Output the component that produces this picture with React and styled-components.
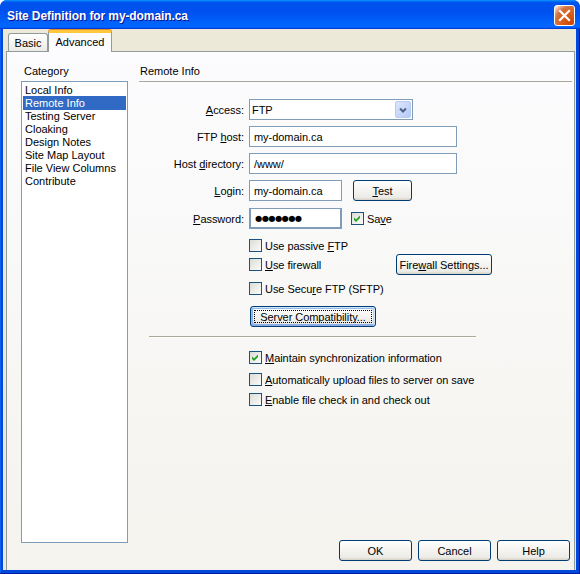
import React from 'react';
import styled, { createGlobalStyle, css } from 'styled-components';

const GlobalStyle = createGlobalStyle`
  html, body { margin: 0; padding: 0; background: #ffffff; }
  body {
    font-family: "Liberation Sans", Arial, sans-serif;
    font-size: 11px;
    color: #000;
  }
`;

const categories = [
  'Local Info',
  'Remote Info',
  'Testing Server',
  'Cloaking',
  'Design Notes',
  'Site Map Layout',
  'File View Columns',
  'Contribute',
];

function CheckMark() {
  return (
    <svg width="11" height="11" viewBox="0 0 11 11">
      <polygon points="2,4.5 4,6.5 8,2.5 8,5 4,9 2,7" fill="#21a121" />
    </svg>
  );
}

function Check({ checked, children, width }) {
  return (
    <CheckField $w={width}>
      <Box>{checked && <CheckMark />}</Box>
      <span>{children}</span>
    </CheckField>
  );
}

function App() {
  return (
    <>
      <GlobalStyle />
      <Window>
        <TitleBar>
          <Title>Site Definition for my-domain.ca</Title>
          <CloseButton>
            <svg width="13" height="13" viewBox="0 0 13 13">
              <path d="M2 2 L11 11 M11 2 L2 11" stroke="#fff" strokeWidth="2.2" strokeLinecap="square" />
            </svg>
          </CloseButton>
        </TitleBar>
        <Frame>
          <Client>
            <TabStrip>
              <Tab $w={40}>Basic</Tab>
              <Tab $w={64} $active>Advanced</Tab>
            </TabStrip>
            <Panel>
              <Sidebar>
                <SideLabel>Category</SideLabel>
                <List>
                  {categories.map((c) => (
                    <ListItem key={c} $selected={c === 'Remote Info'}>{c}</ListItem>
                  ))}
                </List>
              </Sidebar>
              <Main>
                <Heading>Remote Info</Heading>

                <Row $top={17}>
                  <Label><u>A</u>ccess:</Label>
                  <Select>
                    <FieldText $pad={2}>FTP</FieldText>
                    <Arrow>
                      <svg width="8" height="6" viewBox="0 0 8 6">
                        <path d="M1 1.5 L4 4.5 L7 1.5" stroke="#4d6185" strokeWidth="2" fill="none" />
                      </svg>
                    </Arrow>
                  </Select>
                </Row>
                <Row $top={6}>
                  <Label>FTP <u>h</u>ost:</Label>
                  <Field $w={208}><FieldText>my-domain.ca</FieldText></Field>
                </Row>
                <Row $top={6}>
                  <Label>Host <u>d</u>irectory:</Label>
                  <Field $w={208}><FieldText>/www/</FieldText></Field>
                </Row>
                <Row $top={6}>
                  <Label><u>L</u>ogin:</Label>
                  <Field $w={93}><FieldText>my-domain.ca</FieldText></Field>
                  <Button $w={59} $ml={11}><span><u>T</u>est</span></Button>
                </Row>
                <Row $top={7}>
                  <Label><u>P</u>assword:</Label>
                  <Field $w={93} $sunken><Dots>●●●●●●●</Dots></Field>
                  <SaveCheck>
                    <Check checked>Sa<u>v</u>e</Check>
                  </SaveCheck>
                </Row>

                <Row $top={10} $h={13} $indent>
                  <Check>Use passive <u>F</u>TP</Check>
                </Row>
                <Row $top={2} $indent>
                  <Check width={147}><u>U</u>se firewall</Check>
                  <Button $w={96}><span>Fire<u>w</u>all Settings...</span></Button>
                </Row>
                <Row $top={7} $h={13} $indent>
                  <Check>Use Secu<u>r</u>e FTP (SFTP)</Check>
                </Row>
                <Row $top={11} $indent>
                  <Button $w={126} $ml={1} $focused>Server Compatibility...</Button>
                </Row>

                <Separator />

                <Row $top={13} $h={13} $indent>
                  <Check checked><u>M</u>aintain synchronization information</Check>
                </Row>
                <Row $top={9} $h={13} $indent>
                  <Check><u>A</u>utomatically upload files to server on save</Check>
                </Row>
                <Row $top={7} $h={13} $indent>
                  <Check><u>E</u>nable file check in and check out</Check>
                </Row>

                <Footer>
                  <Button $w={73}>OK</Button>
                  <Button $w={73}>Cancel</Button>
                  <Button $w={73}>Help</Button>
                </Footer>
              </Main>
            </Panel>
          </Client>
        </Frame>
      </Window>
    </>
  );
}

const Window = styled.div`
  width: 580px;
  height: 574px;
  display: flex;
  flex-direction: column;
  border-radius: 7px 7px 0 0;
  overflow: hidden;
  background: #0048dc;
`;

const TitleBar = styled.div`
  height: 29px;
  flex: none;
  display: flex;
  align-items: center;
  justify-content: space-between;
  padding: 0 5px 0 7px;
  box-sizing: border-box;
  background: linear-gradient(180deg, #0997ff, #0053ee 8%, #0050ee 40%, #0066ff 88%, #0066ff 93%, #005bff 95%, #003dd7 96%, #003dd7);
`;

const Title = styled.div`
  color: #fff;
  font-weight: bold;
  font-size: 12px;
  letter-spacing: -0.1px;
  text-shadow: 1px 1px #0f1089;
  margin-top: 2px;
`;

const CloseButton = styled.div`
  width: 21px;
  height: 21px;
  box-sizing: border-box;
  margin-top: 2px;
  border: 1px solid #fff;
  border-radius: 3px;
  display: flex;
  align-items: center;
  justify-content: center;
  background: radial-gradient(circle at 90% 90%, #cc4600 0, #dc6527 55%, #cd7546 70%, #ffccb2 90%, #fff 100%);
`;

const Frame = styled.div`
  flex: 1;
  display: flex;
  padding: 0 4px 4px 3px;
  background: #0048dc;
  box-shadow: inset -1px -1px 0 #001c9a, inset 1px 0 0 #0a5ef0;
`;

const Client = styled.div`
  flex: 1;
  display: flex;
  flex-direction: column;
  background: #ece9d8;
  padding: 0 1px 0 3px;
`;

const TabStrip = styled.div`
  height: 22px;
  flex: none;
  display: flex;
  align-items: flex-end;
  padding-left: 2px;
`;

const Tab = styled.div`
  box-sizing: border-box;
  width: ${(p) => p.$w}px;
  height: 18px;
  display: flex;
  align-items: center;
  justify-content: center;
  border: 1px solid #919b9c;
  border-bottom: none;
  border-radius: 3px 3px 0 0;
  background: linear-gradient(180deg, #fff, #ecebe6);
  ${(p) => p.$active && css`
    height: 22px;
    margin-bottom: -1px;
    position: relative;
    z-index: 1;
    padding-bottom: 2px;
    border-top: 3px solid #ffc83c;
    box-shadow: 0 -1px 0 #e68b2c;
    background: #fcfcfe;
  `}
`;

const Panel = styled.div`
  flex: 1;
  display: grid;
  grid-template-columns: 107px 1fr;
  column-gap: 11px;
  padding: 13px 1px 0 14px;
  border: 1px solid #919b9c;
  border-bottom: none;
  background: linear-gradient(180deg, #fcfcfe, #f4f3ee);
`;

const Sidebar = styled.div`
  display: flex;
  flex-direction: column;
  padding-bottom: 27px;
`;

const SideLabel = styled.div`
  line-height: 13px;
  height: 16px;
  padding-left: 3px;
`;

const List = styled.div`
  flex: 1;
  border: 1px solid #7f9db9;
  background: #fff;
  padding: 1px;
`;

const ListItem = styled.div`
  line-height: 13px;
  padding-left: 2px;
  padding-top: 1px;
  margin-bottom: -1px;
  white-space: nowrap;
  ${(p) => p.$selected && css`
    background: #316ac5;
    color: #fff;
  `}
`;

const Main = styled.div`
  display: flex;
  flex-direction: column;
  padding-bottom: 9px;
`;

const Heading = styled.div`
  line-height: 13px;
  padding: 0 0 3px 1px;
  border-bottom: 1px solid #aca899;
  margin-right: 1px;
`;

const Row = styled.div`
  display: flex;
  align-items: center;
  height: ${(p) => p.$h || 21}px;
  margin-top: ${(p) => p.$top}px;
  padding-left: ${(p) => (p.$indent ? 110 : 0)}px;
  letter-spacing: -0.05px;
`;

const Label = styled.div`
  width: 105px;
  margin-right: 5px;
  text-align: right;
  white-space: nowrap;
`;

const Field = styled.div`
  box-sizing: border-box;
  width: ${(p) => p.$w}px;
  height: 21px;
  display: flex;
  align-items: center;
  background: #fff;
  border: 1px solid #7f9db9;
  ${(p) => p.$sunken && css`
    border-width: 1px 2px 2px 2px;
  `}
`;

const Select = styled(Field)`
  width: 164px;
  justify-content: space-between;
  padding-right: 1px;
`;

const FieldText = styled.span`
  padding-left: ${(p) => (p.$pad ?? 4)}px;
  white-space: nowrap;
`;

const Dots = styled.span`
  padding-left: 4px;
  font-family: "DejaVu Sans", sans-serif;
  font-size: 8.2px;
  letter-spacing: -0.5px;
`;

const Arrow = styled.div`
  box-sizing: border-box;
  width: 16px;
  height: 17px;
  display: flex;
  align-items: center;
  justify-content: center;
  border: 1px solid #b9cbf3;
  border-radius: 2px;
  background: linear-gradient(135deg, #dce6fd, #b6c9f6);
`;

const CheckField = styled.div`
  display: flex;
  align-items: center;
  gap: 3px;
  white-space: nowrap;
  ${(p) => p.$w && css`width: ${p.$w}px;`}
`;

const Box = styled.div`
  box-sizing: border-box;
  width: 13px;
  height: 13px;
  flex: none;
  border: 1px solid #1c5180;
  background: linear-gradient(135deg, #dcdcd7, #fbfbf9);
  display: flex;
  align-items: center;
  justify-content: center;
`;

const SaveCheck = styled.div`
  margin-left: 9px;
`;

const Button = styled.div`
  box-sizing: border-box;
  position: relative;
  width: ${(p) => p.$w}px;
  height: 21px;
  flex: none;
  margin-left: ${(p) => p.$ml || 0}px;
  display: flex;
  align-items: center;
  justify-content: center;
  white-space: nowrap;
  border: 1px solid #003c74;
  border-radius: 3px;
  background: linear-gradient(180deg, #fff, #ecebe6 86%, #d6d0c5);
  ${(p) => p.$focused && css`
    box-shadow: inset -1px 1px #cee7ff, inset 1px 2px #98b8ea, inset -2px 2px #bcd4f6, inset 1px -1px #89ade4, inset 2px -2px #89ade4;
    &::after {
      content: '';
      position: absolute;
      inset: 3px;
      border: 1px dotted #000;
    }
  `}
`;

const Separator = styled.div`
  margin: 9px 0 0 10px;
  width: 327px;
  height: 0;
  border-top: 1px solid #aca899;
  border-bottom: 1px solid #fff;
`;

const Footer = styled.div`
  margin-top: auto;
  display: flex;
  justify-content: flex-end;
  gap: 6px;
  padding-right: 3px;
`;

export default App;
